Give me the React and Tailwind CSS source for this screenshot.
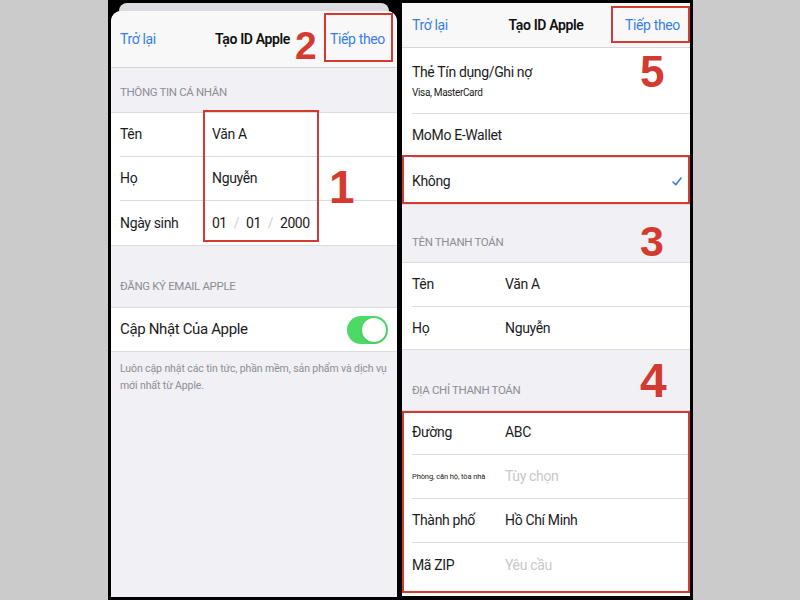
import React from 'react';

const font = { fontFamily: 'Roboto, "Noto Sans", sans-serif' };

function Num({ children, className }) {
  return (
    <span
      className={`absolute font-bold leading-none text-[#d43b30] ${className}`}
      style={{ fontFamily: '"Liberation Sans", Arial, sans-serif' }}
    >
      {children}
    </span>
  );
}

function Box({ className }) {
  return <div className={`absolute border-[2.5px] border-[#d43b30] pointer-events-none ${className}`} />;
}

function Row({ label, value, last, labelClass = 'text-[14px]', valueClass = 'text-[#1c1c1e]', labelW = 'w-[92px]', pl = 'pl-[9px]', h = 'h-[44px]' }) {
  return (
    <div className={`${pl} bg-white`}>
      <div className={`${h} flex items-center ${last ? '' : 'border-b border-[#dcdce0]'}`}>
        <span className={`${labelW} shrink-0 text-[#1c1c1e] ${labelClass}`}>{label}</span>
        <span className={`text-[14px] ${valueClass}`}>{value}</span>
      </div>
    </div>
  );
}

function Nav({ h, pl, pr }) {
  return (
    <div className={`${h} ${pl} ${pr} bg-[#f8f8f8] border-b border-[#d6d6da] flex items-center text-[14px]`}>
      <span className="flex-1 text-[#3a7ee8]">Trở lại</span>
      <span className="font-semibold text-[#111]">Tạo ID Apple</span>
      <span className="flex-1 text-right text-[#3a7ee8]">Tiếp theo</span>
    </div>
  );
}

function LeftPhone() {
  return (
    <div className="relative w-[294px] h-full bg-black flex flex-col pt-[3px] pl-[3px] pr-[5px] pb-[3px]">
      <div className="mx-[8px] h-[8px] rounded-t-[10px] bg-[#dcdce0]" />
      <div className="flex-1 rounded-t-[10px] overflow-hidden bg-[#f0f0f5] flex flex-col tracking-[-0.35px]">
        <Nav h="h-[57px]" pl="pl-[9px]" pr="pr-[12px]" />
        <div className="h-[44px] px-[9px] flex items-end pb-[12px] text-[11.5px] leading-[16px] text-[#8e8e93]">
          THÔNG TIN CÁ NHÂN
        </div>
        <div className="border-y border-[#dcdce0]">
          <Row label="Tên" value="Văn A" />
          <Row label="Họ" value="Nguyễn" />
          <Row
            label="Ngày sinh"
            last
            value={
              <span className="flex gap-[7px] tracking-[-0.5px]">
                <span>01</span>
                <span className="text-[#d0d0d4]">/</span>
                <span>01</span>
                <span className="text-[#d0d0d4]">/</span>
                <span>2000</span>
              </span>
            }
          />
        </div>
        <div className="h-[61px] px-[9px] flex items-end pb-[13px] text-[11.5px] leading-[16px] text-[#8e8e93]">
          ĐĂNG KÝ EMAIL APPLE
        </div>
        <div className="h-[45px] bg-white border-y border-[#dcdce0] flex items-center justify-between pl-[9px] pr-[9px]">
          <span className="text-[15px] text-[#1c1c1e]">Cập Nhật Của Apple</span>
          <div className="w-[41px] h-[28px] rounded-full bg-[#4cd964] flex items-center justify-end pr-[2px]">
            <div className="w-[24px] h-[24px] rounded-full bg-white shadow" />
          </div>
        </div>
        <div className="px-[9px] pt-[8px] text-[10.5px] leading-[17px] text-[#8e8e93] tracking-[-0.1px]">
          Luôn cập nhật các tin tức, phần mềm, sản phẩm và dịch vụ
          <br />
          mới nhất từ Apple.
        </div>
      </div>
      <Box className="left-[216px] top-[13px] w-[69px] h-[49px]" />
      <Num className="left-[187px] top-[26px] text-[39px]">2</Num>
      <Box className="left-[95px] top-[110px] w-[116px] h-[132px]" />
      <Num className="left-[221px] top-[164px] text-[46px]">1</Num>
    </div>
  );
}

function RightPhone() {
  const ph = 'text-[#c7c7cc]';
  return (
    <div className="relative w-[291px] h-full bg-black flex flex-col pt-[3px] pr-[3px] pb-[4px]">
      <div className="flex-1 bg-[#f0f0f5] flex flex-col tracking-[-0.35px]">
        <Nav h="h-[45px]" pl="pl-[10px]" pr="pr-[10px]" />
        <div className="bg-white">
          <div className="pl-[10px]">
            <div className="h-[66px] border-b border-[#dcdce0] flex flex-col justify-center gap-[6px]">
              <span className="text-[14px] leading-[18px] text-[#1c1c1e]">Thẻ Tín dụng/Ghi nợ</span>
              <span className="text-[10px] leading-[12px] text-[#1c1c1e]">Visa, MasterCard</span>
            </div>
          </div>
          <Row label="MoMo E-Wallet" value="" pl="pl-[10px]" labelW="w-auto" />
          <div className="h-[46px] flex items-center justify-between pl-[10px] pr-[8px]">
            <span className="text-[14px] text-[#1c1c1e]">Không</span>
            <svg width="10" height="9" viewBox="0 0 10 9" fill="none">
              <path d="M1 5 L3.8 7.8 L9 1" stroke="#3a7ee8" strokeWidth="1.6" strokeLinecap="round" strokeLinejoin="round" />
            </svg>
          </div>
        </div>
        <div className="h-[58px] px-[10px] flex items-end pb-[12px] text-[11.5px] leading-[16px] text-[#8e8e93] border-t border-[#dcdce0]">
          TÊN THANH TOÁN
        </div>
        <div className="border-y border-[#dcdce0]">
          <Row label="Tên" value="Văn A" pl="pl-[10px]" labelW="w-[93px]" />
          <Row label="Họ" value="Nguyễn" pl="pl-[10px]" labelW="w-[93px]" last h="h-[42px]" />
        </div>
        <div className="h-[60px] px-[10px] flex items-end pb-[12px] text-[11.5px] leading-[16px] text-[#8e8e93]">
          ĐỊA CHỈ THANH TOÁN
        </div>
        <div className="flex-1 bg-white border-t border-[#dcdce0]">
          <Row label="Đường" value="ABC" pl="pl-[10px]" labelW="w-[93px]" />
          <Row label="Phòng, căn hộ, tòa nhà" labelClass="text-[7.5px] tracking-[-0.1px]" value="Tùy chọn" valueClass={ph} pl="pl-[10px]" labelW="w-[93px]" />
          <Row label="Thành phố" value="Hồ Chí Minh" pl="pl-[10px]" labelW="w-[93px]" />
          <Row label="Mã ZIP" value="Yêu cầu" valueClass={ph} pl="pl-[10px]" labelW="w-[93px]" last />
        </div>
      </div>
      <Box className="left-[209px] top-[6px] w-[79px] h-[37px]" />
      <Num className="left-[238px] top-[50px] text-[44px]">5</Num>
      <Box className="left-0 top-[155px] w-[288px] h-[49px]" />
      <Num className="left-[238px] top-[220px] text-[43px]">3</Num>
      <Num className="left-[238px] top-[357px] text-[48px]">4</Num>
      <Box className="left-0 top-[411px] w-[288px] h-[182px]" />
    </div>
  );
}

export default function App() {
  return (
    <div className="w-[800px] h-[600px] bg-[#cbcbcb] flex pl-[108px] overflow-hidden" style={font}>
      <LeftPhone />
      <RightPhone />
    </div>
  );
}
